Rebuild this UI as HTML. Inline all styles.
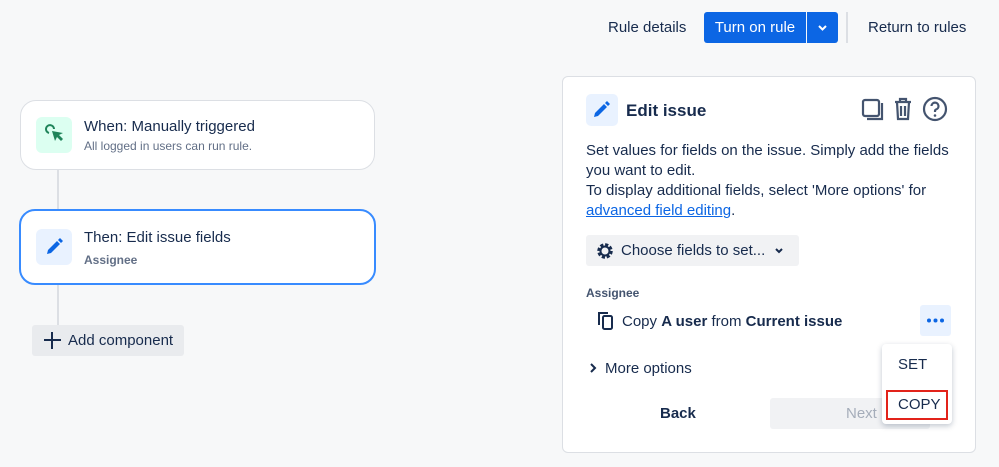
<!DOCTYPE html>
<html><head><style>
*{box-sizing:border-box;margin:0;padding:0}
body{width:999px;height:467px;background:#f7f8f9;font-family:"Liberation Sans",sans-serif;color:#172b4d;position:relative;overflow:hidden}
.a{position:absolute}
.t{font-size:15px}
</style></head><body>
<div class="a t" style="left:608px;top:19px">Rule details</div>
<div class="a" style="left:704px;top:12px;width:102px;height:31px;background:#0c66e4;border-radius:3px 0 0 3px;color:#fff;font-size:15px;line-height:31px;text-align:center">Turn on rule</div>
<div class="a" style="left:807px;top:12px;width:31px;height:31px;background:#0c66e4;border-radius:0 3px 3px 0"><svg width="31" height="31"><path d="M12 14l3.5 3.5L19 14" stroke="#fff" stroke-width="2" fill="none"/></svg></div>
<div class="a" style="left:846px;top:12px;width:2px;height:31px;background:#dcdfe4"></div>
<div class="a t" style="left:868px;top:19px">Return to rules</div>

<div class="a" style="left:57px;top:168px;width:2px;height:45px;background:#dcdfe4"></div>
<div class="a" style="left:57px;top:284px;width:2px;height:42px;background:#dcdfe4"></div>

<div class="a" style="left:20px;top:100px;width:355px;height:70px;background:#fff;border:1px solid #dcdfe4;border-radius:16px"></div>
<div class="a" style="left:36px;top:117px;width:36px;height:36px;background:#dcfff1;border-radius:6px"><svg width="36" height="36"><path d="M13 16a4 4 0 1 1 5-4" stroke="#1f845a" stroke-width="2" fill="none"/><path d="M16 14l3 10 2-4 4 4 2-2-4-4 4-2z" fill="#1f845a"/></svg></div>
<div class="a t" style="left:84px;top:118px">When: Manually triggered</div>
<div class="a" style="left:84px;top:139px;font-size:12px;color:#626f86">All logged in users can run rule.</div>

<div class="a" style="left:19px;top:209px;width:357px;height:76px;background:#fff;border:2px solid #388bff;border-radius:16px"></div>
<div class="a" style="left:36px;top:229px;width:36px;height:36px;background:#e9f2ff;border-radius:6px"><svg width="36" height="36"><path d="M11 25l1-4 9-9 3 3-9 9z M22 11l2-2 3 3-2 2z" fill="#0c66e4"/></svg></div>
<div class="a t" style="left:84px;top:229px">Then: Edit issue fields</div>
<div class="a" style="left:84px;top:253px;font-size:12px;color:#626f86;font-weight:bold">Assignee</div>

<div class="a" style="left:32px;top:325px;width:152px;height:31px;background:#e9ebee;border-radius:3px;font-size:15px;line-height:31px;padding-left:36px">Add component</div>
<svg class="a" style="left:42px;top:330px" width="20" height="20"><path d="M10 2v17M2 10h17" stroke="#172b4d" stroke-width="2"/></svg>

<div class="a" style="left:562px;top:76px;width:414px;height:377px;background:#fff;border:1px solid #dcdfe4;border-radius:6px"></div>
<div class="a" style="left:586px;top:94px;width:32px;height:32px;background:#e9f2ff;border-radius:5px"><svg width="32" height="32"><path d="M8 23l1-4 9-9 3 3-9 9z M19 9l2-2 3 3-2 2z" fill="#0c66e4"/></svg></div>
<div class="a" style="left:626px;top:101px;font-size:17px;font-weight:bold">Edit issue</div>
<svg class="a" style="left:860px;top:96px" width="90" height="28"><g stroke="#44546f" stroke-width="2.2" fill="none"><rect x="3" y="4" width="16" height="16" rx="2"/><path d="M22 7v16H7"/><path d="M35 6h16M40 6V3h6v3M37 6l1 17h10l1-17M41 10v10M45 10v10"/><circle cx="75" cy="13" r="11"/><path d="M71.5 10a3.5 3.5 0 1 1 4.5 3.5c-1 .4-1 1-1 2.5"/></g><circle cx="75" cy="19.5" r="1.3" fill="#44546f"/></svg>
<div class="a t" style="left:586px;top:141px;line-height:20px;width:380px">Set values for fields on the issue. Simply add the fields you want to edit.<br>To display additional fields, select 'More options' for <span style="color:#0c66e4;text-decoration:underline">advanced field editing</span>.</div>
<div class="a" style="left:586px;top:235px;width:213px;height:31px;background:#f1f2f4;border-radius:3px;font-size:15px;line-height:31px;padding-left:35px">Choose fields to set...</div>
<svg class="a" style="left:594px;top:240px" width="210" height="22"><circle cx="11" cy="11" r="6" stroke="#172b4d" stroke-width="3.5" fill="none" stroke-dasharray="3 1.7"/><circle cx="11" cy="11" r="4.5" stroke="#172b4d" stroke-width="2" fill="none"/><path d="M182 9l3 3 3-3" stroke="#172b4d" stroke-width="2" fill="none"/></svg>
<div class="a" style="left:586px;top:286px;font-size:12px;font-weight:bold;color:#44546f">Assignee</div>
<svg class="a" style="left:596px;top:310px" width="20" height="22"><path d="M3 15V3h9" stroke="#172b4d" stroke-width="2" fill="none"/><rect x="7" y="6" width="9" height="13" rx="1.5" stroke="#172b4d" stroke-width="2" fill="none"/></svg>
<div class="a t" style="left:622px;top:313px">Copy <b>A user</b> from <b>Current issue</b></div>
<div class="a" style="left:920px;top:305px;width:31px;height:31px;background:#e9f2ff;border-radius:3px"><svg width="31" height="31"><g fill="#0c66e4"><circle cx="9" cy="15.5" r="2"/><circle cx="15.5" cy="15.5" r="2"/><circle cx="22" cy="15.5" r="2"/></g></svg></div>
<svg class="a" style="left:588px;top:362px" width="10" height="12"><path d="M3 2l4 4-4 4" stroke="#172b4d" stroke-width="2" fill="none"/></svg>
<div class="a t" style="left:605px;top:360px">More options</div>
<div class="a t" style="left:660px;top:405px;font-weight:bold">Back</div>
<div class="a" style="left:770px;top:398px;width:160px;height:31px;background:#f1f2f4;border-radius:3px;color:#a5adba;font-size:15px;line-height:31px;padding-left:76px">Next</div>
<div class="a" style="left:882px;top:344px;width:70px;height:80px;background:#fff;border-radius:4px;box-shadow:0 2px 6px rgba(9,30,66,.25)"></div>
<div class="a t" style="left:898px;top:356px">SET</div>
<div class="a" style="left:886px;top:390px;width:62px;height:30px;border:2px solid #e2231a;font-size:15px;line-height:26px;padding-left:10px">COPY</div>
</body></html>
